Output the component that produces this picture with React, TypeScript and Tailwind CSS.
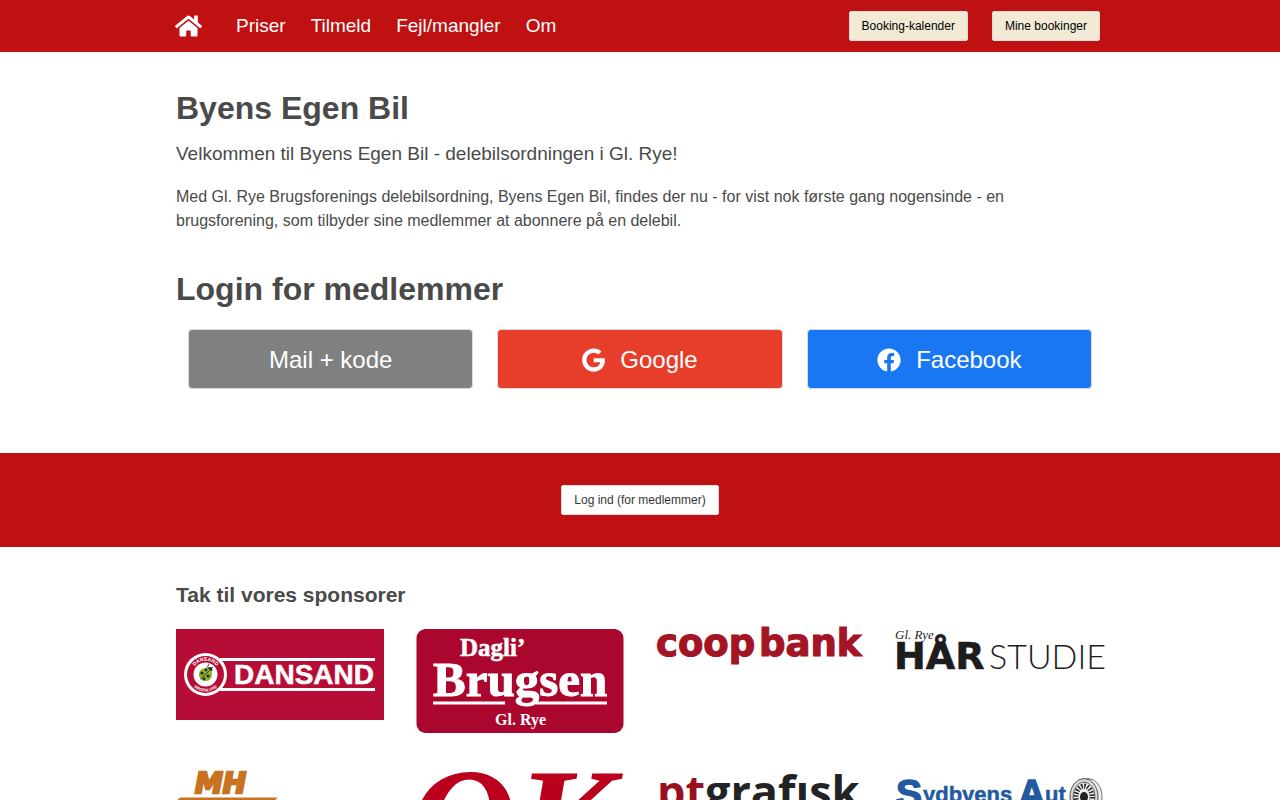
import React from 'react';
import { FaFacebook, FaGoogle, FaHome } from 'react-icons/fa';

interface NavLink {
  label: string;
  href: string;
}

interface Sponsor {
  name: string;
  Logo: React.FC;
}

const navLinks: NavLink[] = [
  { label: 'Priser', href: '#priser' },
  { label: 'Tilmeld', href: '#tilmeld' },
  { label: 'Fejl/mangler', href: '#fejl' },
  { label: 'Om', href: '#om' },
];

const DansandLogo: React.FC = () => (
  <svg viewBox="0 0 208 91" className="block w-full">
    <rect width="208" height="91" fill="#b50d35" />
    <path d="M44 30.5H199M44 60.5H199" stroke="#fff" strokeWidth="3" />
    <circle cx="29.5" cy="45.5" r="21.5" fill="#fff" />
    <circle cx="29.5" cy="45.5" r="18.5" fill="#b50d35" />
    <circle cx="29.5" cy="45.5" r="12" fill="#fff" />
    <path d="M31 39l2-4M34 41l3-3" stroke="#222" strokeWidth="0.8" />
    <circle cx="34" cy="40.5" r="2.4" fill="#222" />
    <circle cx="29.5" cy="45.5" r="6.6" fill="#8fb52c" />
    <path d="M24.5 50L34 41" stroke="#222" strokeWidth="0.8" />
    <circle cx="26" cy="44" r="1.6" fill="#222" />
    <circle cx="30" cy="41" r="1.4" fill="#222" />
    <circle cx="32" cy="47" r="1.6" fill="#222" />
    <circle cx="28" cy="50" r="1.4" fill="#222" />
    <path id="badge-top" d="M15.7 45.5a13.8 13.8 0 0 1 27.6 0" fill="none" />
    <path id="badge-bottom" d="M12.5 45.5a17 17 0 0 0 34 0" fill="none" />
    <g fill="#fff" fontFamily="Liberation Sans, sans-serif" fontWeight="700" textAnchor="middle">
      <text fontSize="5"><textPath href="#badge-top" startOffset="50%">DANSAND</textPath></text>
      <text fontSize="4"><textPath href="#badge-bottom" startOffset="50%">SØGENLUND</textPath></text>
    </g>
    <text x="58" y="55" fill="#fff" stroke="#fff" strokeWidth="0.5" fontFamily="Liberation Sans, sans-serif" fontWeight="700" fontSize="28">DANSAND</text>
  </svg>
);

const BrugsenLogo: React.FC = () => (
  <svg viewBox="0 0 208 104" className="block w-full">
    <rect x="0.5" width="207" height="104" rx="9" fill="#ab062d" />
    <path d="M17 74H89M120 74H191" stroke="#fff" strokeWidth="3" />
    <g fill="#fff" fontFamily="Liberation Serif, serif" fontWeight="700">
      <text x="44" y="27" fontSize="25" stroke="#fff" strokeWidth="0.5">Dagli’</text>
      <text x="17" y="67" fontSize="49" stroke="#fff" strokeWidth="1">Brugsen</text>
      <text x="79" y="96" fontSize="16">Gl. Rye</text>
    </g>
  </svg>
);

const CoopBankLogo: React.FC = () => (
  <svg viewBox="0 0 208 34" className="block w-full overflow-visible">
    <g fill="#a31424" stroke="#a31424" strokeWidth="1.2" fontFamily="DejaVu Sans, sans-serif" fontWeight="700" fontSize="37">
      <text x="0" y="27">coop</text>
      <text x="103" y="27">bank</text>
    </g>
  </svg>
);

const HaarstudieLogo: React.FC = () => (
  <svg viewBox="0 0 208 43" className="block w-full overflow-visible" fill="#1d1d1f">
    <text x="-1" y="10" fontFamily="Liberation Serif, serif" fontStyle="italic" fontSize="13">Gl. Rye</text>
    <text x="-2" y="40" stroke="#1d1d1f" strokeWidth="0.6" fontFamily="DejaVu Sans, sans-serif" fontWeight="700" fontSize="38">HÅR</text>
    <text x="93" y="40" fontFamily="Lato, sans-serif" fontWeight="300" fontSize="34">STUDIE</text>
  </svg>
);

const MhLogo: React.FC = () => (
  <svg viewBox="0 0 208 60" className="block w-full overflow-visible" fill="#c87320">
    <text x="19" y="21" stroke="#c87320" strokeWidth="2.5" fontFamily="DejaVu Sans, sans-serif" fontWeight="700" fontStyle="italic" fontSize="28">MH</text>
    <path d="M4 25.5H101.5L99 28.5H1Z" />
  </svg>
);

const OkLogo: React.FC = () => (
  <svg viewBox="0 0 208 100" className="block w-full overflow-visible" fill="#ba001d">
    <text x="-7" y="99" fontFamily="Liberation Serif, serif" fontWeight="700" fontStyle="italic" fontSize="148">OK</text>
  </svg>
);

const PtGrafiskLogo: React.FC = () => (
  <svg viewBox="0 0 208 60" className="block w-full overflow-visible">
    <text x="1" y="36" fontFamily="Open Sans, sans-serif" fontWeight="700" fontSize="45" fill="#222325">
      <tspan fill="#99101f">pt</tspan>grafısk
    </text>
  </svg>
);

const SydbyensLogo: React.FC = () => (
  <svg viewBox="0 0 208 60" className="block w-full overflow-visible">
    <g fill="#235a9f" stroke="#235a9f" strokeWidth="0.5" fontFamily="Liberation Sans, sans-serif" fontWeight="700">
      <text x="0" y="35" fontSize="39" strokeWidth="1.5">S</text>
      <text x="27" y="30" fontSize="22">ydbyens</text>
      <text x="122" y="35" fontSize="38" strokeWidth="1.5">A</text>
      <text x="149" y="30" fontSize="22">ut</text>
    </g>
    <ellipse cx="192" cy="25" rx="14" ry="18.5" fill="#eee" stroke="#777" />
    <ellipse cx="188" cy="25" rx="14" ry="18.5" fill="#d8d8d8" stroke="#555" />
    <ellipse cx="188" cy="25" rx="11" ry="15" fill="#eee" stroke="#666" />
    <ellipse cx="188" cy="25" rx="8" ry="11" fill="none" stroke="#222" strokeWidth="5" strokeDasharray="1.5 1.5" />
    <ellipse cx="188" cy="25" rx="4" ry="5" fill="#222" />
  </svg>
);

const sponsors: Sponsor[] = [
  { name: 'Dansand', Logo: DansandLogo },
  { name: "Dagli'Brugsen Gl. Rye", Logo: BrugsenLogo },
  { name: 'Coop Bank', Logo: CoopBankLogo },
  { name: 'Gl. Rye Hårstudie', Logo: HaarstudieLogo },
  { name: 'MH', Logo: MhLogo },
  { name: 'OK', Logo: OkLogo },
  { name: 'ptgrafisk', Logo: PtGrafiskLogo },
  { name: 'Sydbyens Auto', Logo: SydbyensLogo },
];

const Header: React.FC = () => (
  <header className="bg-[#bf1111]">
    <nav className="mx-auto flex min-h-[52px] max-w-[944px] items-center justify-between pl-[7px] pr-3">
      <div className="flex items-center">
        <a href="#" aria-label="Forside" className="mr-[34px] text-white">
          <FaHome className="h-6 w-[27px]" />
        </a>
        <div className="flex gap-[25px] text-[19px] leading-7 text-white">
          {navLinks.map(({ label, href }) => (
            <a key={label} href={href}>{label}</a>
          ))}
        </div>
      </div>
      <div className="flex gap-6">
        <button type="button" className="h-[30px] rounded-[2px] border border-[#dbdbdb] bg-[#f2ead5] px-3 text-xs text-black">Booking-kalender</button>
        <button type="button" className="h-[30px] rounded-[2px] border border-[#dbdbdb] bg-[#f2ead5] px-3 text-xs text-black">Mine bookinger</button>
      </div>
    </nav>
  </header>
);

const loginButton = 'flex h-[60px] items-center justify-center gap-[15px] rounded border border-[#dbdbdb] pt-px text-2xl text-white';

const App: React.FC = () => {
  return (
    <div className="bg-white font-['Liberation_Sans',Arial,sans-serif] text-[#4a4a4a]">
      <Header />

      <main>
        <section className="mx-auto max-w-[960px] px-4 pt-[38px] pb-16">
          <h1 className="text-[32px] leading-9 font-bold">Byens Egen Bil</h1>
          <p className="mt-[14px] text-[19px] leading-7">Velkommen til Byens Egen Bil - delebilsordningen i Gl. Rye!</p>
          <p className="mt-[17px] text-base leading-6">
            Med Gl. Rye Brugsforenings delebilsordning, Byens Egen Bil, findes der nu - for vist nok første gang nogensinde - en
            brugsforening, som tilbyder sine medlemmer at abonnere på en delebil.
          </p>

          <h2 className="mt-[38px] text-[32px] leading-9 font-bold">Login for medlemmer</h2>
          <div className="mt-[22px] grid grid-cols-3 gap-6 px-3">
            <button type="button" className={`${loginButton} bg-[#808080]`}>Mail + kode</button>
            <button type="button" className={`${loginButton} bg-[#e63e2b]`}>
              <FaGoogle className="h-6 w-[23px]" />
              Google
            </button>
            <button type="button" className={`${loginButton} bg-[#1977f3]`}>
              <FaFacebook className="size-6" />
              Facebook
            </button>
          </div>
        </section>

        <section className="flex justify-center bg-[#bf1111] py-8">
          <button type="button" className="h-[30px] rounded-[2px] border border-[#dbdbdb] bg-white px-3 text-xs text-[#363636]">Log ind (for medlemmer)</button>
        </section>

        <section className="mx-auto max-w-[960px] px-4 pt-[34px] pb-16">
          <h3 className="text-[21px] leading-7 font-bold">Tak til vores sponsorer</h3>
          <div className="mt-5 grid grid-cols-4 items-start gap-x-8 gap-y-[39px]">
            {sponsors.map(({ name, Logo }) => (
              <a key={name} href="#sponsorer" aria-label={name}>
                <Logo />
              </a>
            ))}
          </div>
        </section>
      </main>
    </div>
  );
};

export default App;
